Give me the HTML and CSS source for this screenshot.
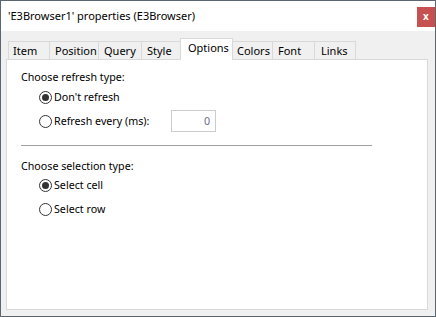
FILE: index.html
```html
<!DOCTYPE html>
<html>
<head>
<meta charset="utf-8">
<link rel="stylesheet" href="styles.css">
</head>
<body>
<div class="window">
  <div class="titlebar">
    <span class="title">'E3Browser1' properties (E3Browser)</span>
    <span class="close">x</span>
  </div>
  <div class="client">
    <div class="tabs">
      <div class="tab t-item">Item</div>
      <div class="tab t-position">Position</div>
      <div class="tab t-query">Query</div>
      <div class="tab t-style">Style</div>
      <div class="tab active t-options">Options</div>
      <div class="tab t-colors">Colors</div>
      <div class="tab t-font">Font</div>
      <div class="tab t-links">Links</div>
    </div>
    <div class="page">
      <div class="section-label">Choose refresh type:</div>
      <div class="option first"><span class="radio checked"></span><span class="opt-text">Don't refresh</span></div>
      <div class="option input-row"><span class="radio"></span><span class="opt-text wide">Refresh every (ms):</span><span class="numbox">0</span></div>
      <div class="separator"></div>
      <div class="section-label second">Choose selection type:</div>
      <div class="option first2"><span class="radio checked"></span><span class="opt-text">Select cell</span></div>
      <div class="option last"><span class="radio"></span><span class="opt-text">Select row</span></div>
    </div>
  </div>
</div>
</body>
</html>
```
FILE: styles.css
```css
html, body {
  margin: 0;
  padding: 0;
}
body {
  width: 436px;
  height: 317px;
  overflow: hidden;
  font-family: "Noto Sans", "Open Sans", sans-serif;
  font-size: 10.7px;
  color: #000;
}
.window {
  box-sizing: border-box;
  width: 436px;
  height: 317px;
  border: 1px solid #5c666e;
  display: flex;
  flex-direction: column;
  background: #f0f0f0;
}
.titlebar {
  height: 30px;
  background: #fff;
  display: flex;
  align-items: flex-start;
  justify-content: space-between;
  flex: none;
}
.title {
  margin-left: 7px;
  line-height: 30px;
  font-size: 11px;
}
.close {
  margin-top: 6px;
  width: 18px;
  height: 20px;
  background: #c75050;
  color: #fff;
  font-weight: bold;
  font-size: 10px;
  line-height: 19px;
  text-align: center;
}
.client {
  flex: 1;
  padding: 7px 7px 6px 5px;
  display: flex;
  flex-direction: column;
}
.tabs {
  display: flex;
  align-items: flex-end;
  height: 21px;
  padding-left: 2px;
  position: relative;
  z-index: 1;
}
.tab {
  box-sizing: border-box;
  flex: none;
  height: 18px;
  padding: 0 0 0 4px;
  border: 1px solid #d9d9d9;
  border-bottom: none;
  margin-right: -1px;
  background: #f0f0f0;
  line-height: 17px;
  font-size: 11px;
  white-space: nowrap;
  overflow: hidden;
}
.t-item { width: 42px; }
.t-position { width: 50px; padding-left: 5px; }
.t-query { width: 44px; padding-left: 5px; }
.t-style { width: 42px; padding-left: 5px; }
.t-colors { width: 41px; padding-left: 4px; }
.t-font { width: 43px; padding-left: 5px; }
.t-links { width: 42px; padding-left: 6px; }
.tab.active {
  width: 53px;
  height: 22px;
  margin-bottom: -1px;
  margin-left: -2px;
  margin-right: -1px;
  padding-left: 7px;
  background: #fff;
  line-height: 18px;
  position: relative;
  z-index: 2;
}
.page {
  flex: 1;
  background: #fff;
  border: 1px solid #d9d9d9;
  padding: 9px 14px 0 14px;
}
.section-label {
  height: 16px;
  line-height: 16px;
}
.section-label.second {
  margin-top: 12px;
}
.option {
  display: flex;
  align-items: center;
  height: 16px;
  padding-left: 18px;
}
.option.first {
  margin-top: 4px;
}
.option.input-row {
  height: 22px;
  margin-top: 5px;
}
.option.first2 {
  margin-top: 3px;
}
.option.last {
  margin-top: 8px;
}
.radio {
  box-sizing: border-box;
  width: 13px;
  height: 13px;
  border: 1px solid #333;
  border-radius: 50%;
  background: #fff;
  flex: none;
  position: relative;
}
.radio.checked::after {
  content: "";
  position: absolute;
  left: 2px;
  top: 2px;
  width: 7px;
  height: 7px;
  border-radius: 50%;
  background: #333;
}
.opt-text {
  margin-left: 2px;
  line-height: 16px;
}
.opt-text.wide {
  width: 117px;
}
.numbox {
  box-sizing: border-box;
  width: 45px;
  height: 22px;
  border: 1px solid #cccccc;
  text-align: right;
  padding-right: 5px;
  line-height: 20px;
  color: #6d6d8d;
}
.separator {
  margin-top: 13px;
  width: 351px;
  height: 1px;
  background: #a0a0a0;
}
```
